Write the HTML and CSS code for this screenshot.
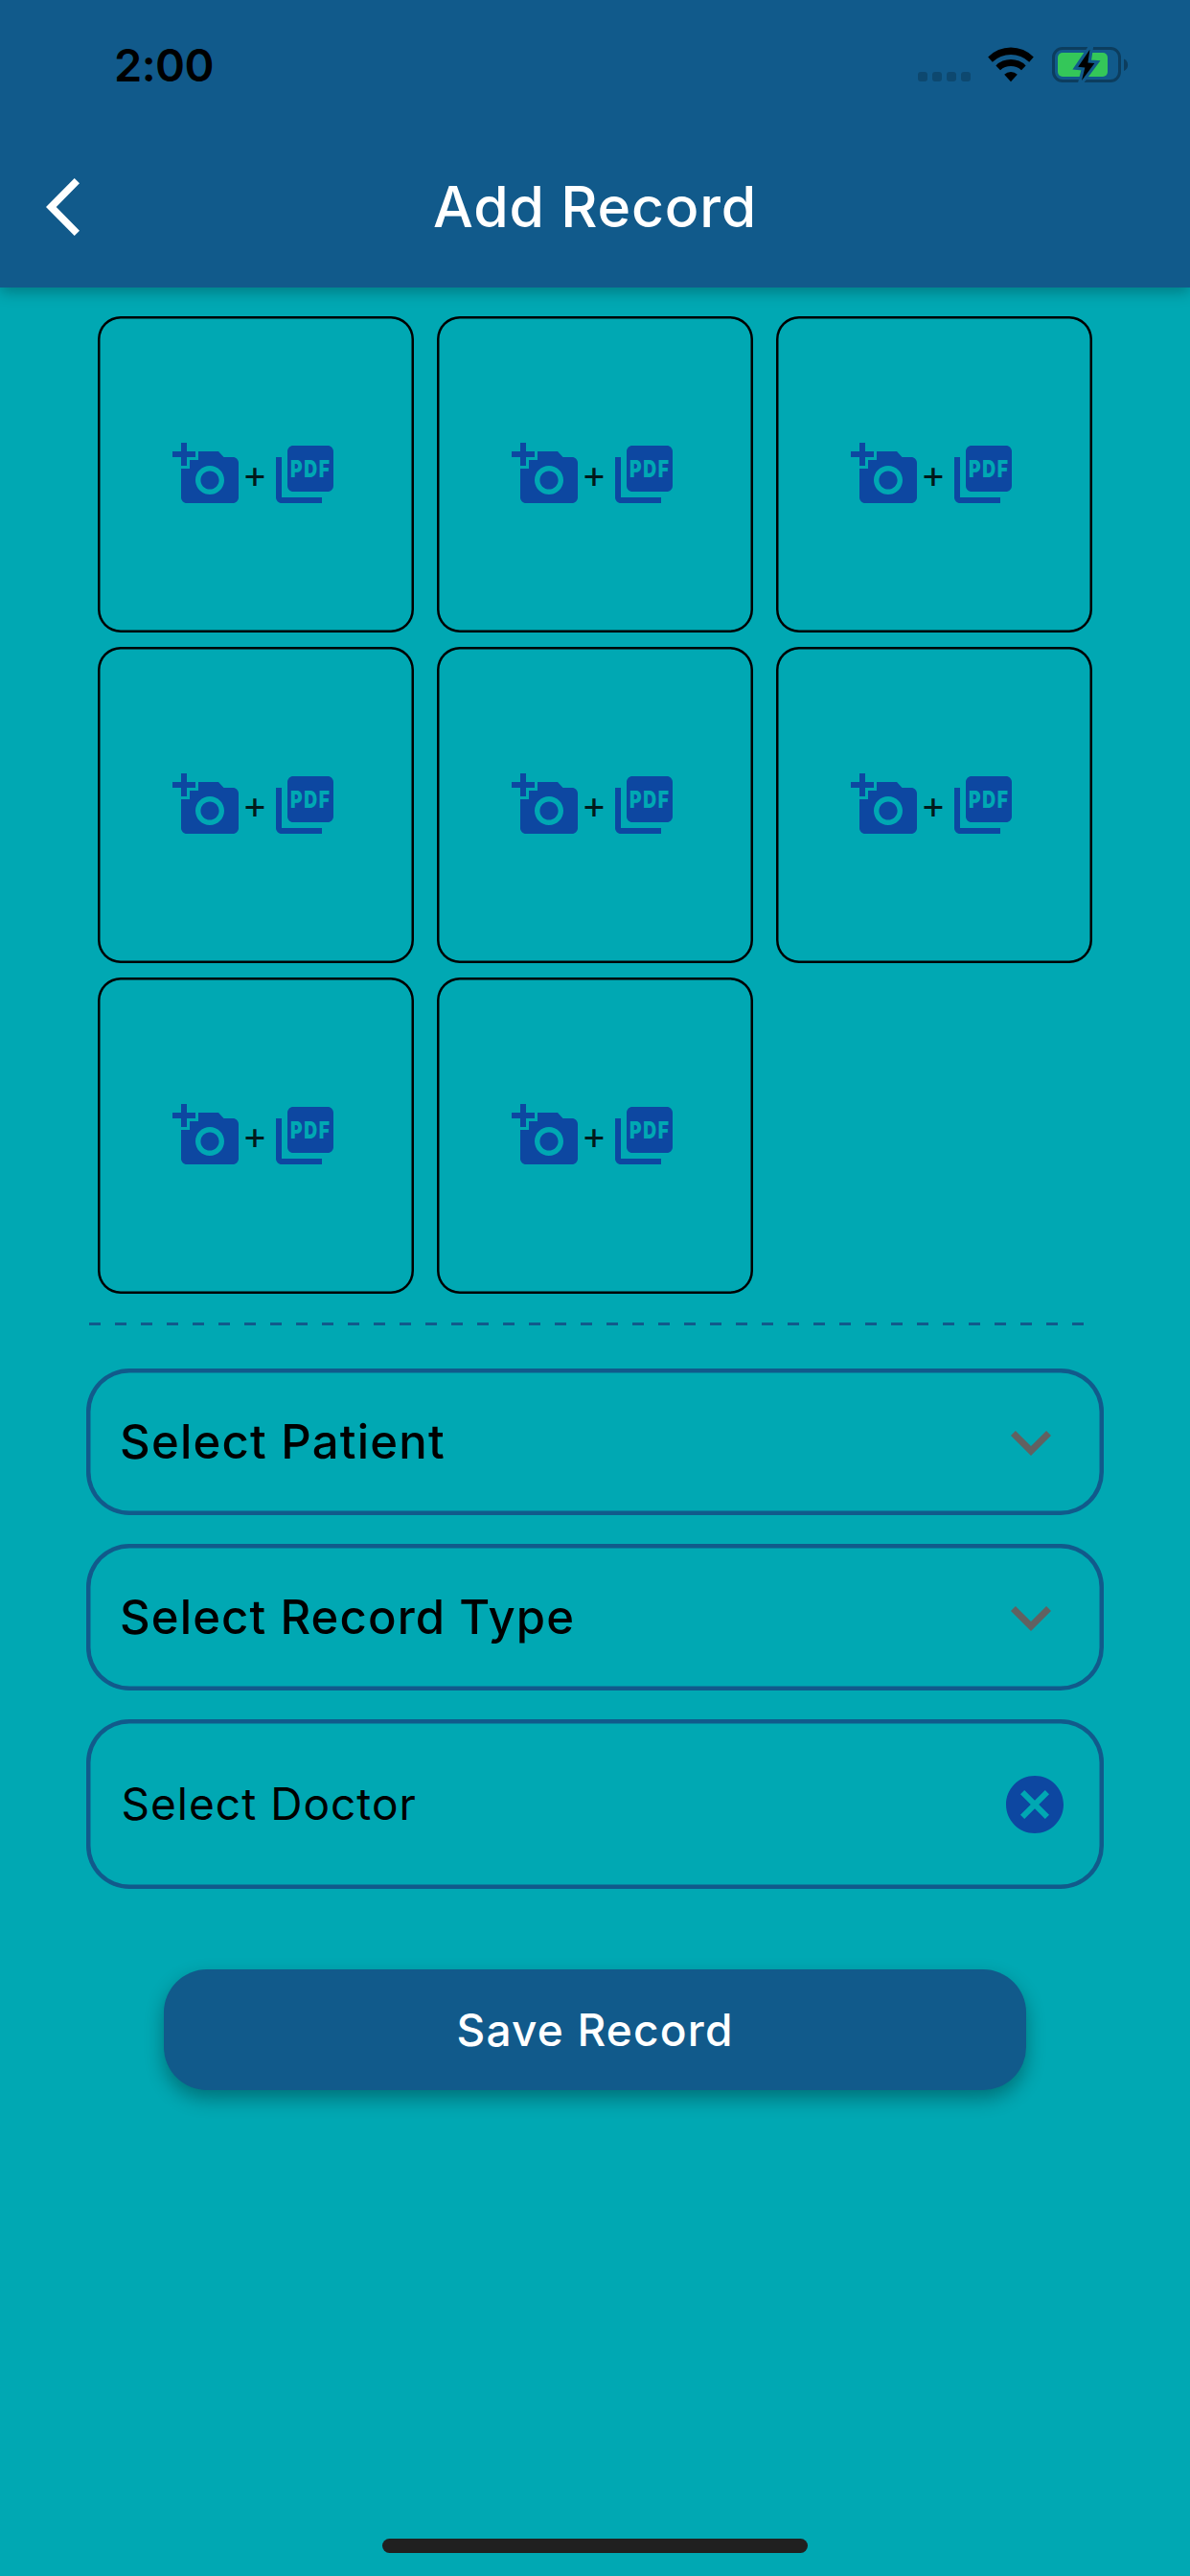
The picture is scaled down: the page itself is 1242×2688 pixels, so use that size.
FILE: index.html
```html
<!DOCTYPE html>
<html lang="en">
<head>
<meta charset="utf-8">
<meta name="viewport" content="width=device-width">
<title>Add Record</title>
<link rel="stylesheet" href="styles.css">
</head>
<body>
<svg width="0" height="0" class="defs" aria-hidden="true">
  <symbol id="add-photo" viewBox="0 0 24 24">
    <path d="M3 4V1h2v3h3v2H5v3H3V6H0V4h3zm3 6V7h3V4h7l1.83 2H21c1.1 0 2 .9 2 2v12c0 1.1-.9 2-2 2H5c-1.1 0-2-.9-2-2V10h3zm7 9c2.76 0 5-2.24 5-5s-2.24-5-5-5-5 2.24-5 5 2.24 5 5 5zm-3.2-5c0 1.77 1.43 3.2 3.2 3.2s3.2-1.43 3.2-3.2-1.43-3.2-3.2-3.2-3.2 1.43-3.2 3.2z"/>
  </symbol>
  <symbol id="pages" viewBox="0 0 24 24">
    <path d="M20 2H8c-1.1 0-2 .9-2 2v12c0 1.1.9 2 2 2h12c1.1 0 2-.9 2-2V4c0-1.1-.9-2-2-2zM4 6H2v14c0 1.1.9 2 2 2h14v-2H4V6z"/>
  </symbol>
  <symbol id="chevron-down" viewBox="0 0 24 24">
    <path d="M7.41 8.59L12 13.17l4.59-4.58L18 10l-6 6-6-6z"/>
  </symbol>
</svg>

<header class="app-bar">
  <div class="status-bar">
    <span class="time">2:00</span>
    <div class="status-icons">
      <span class="signal"><i></i><i></i><i></i><i></i></span>
      <svg class="wifi" width="48" height="37" viewBox="0 0 48 37">
        <path d="M0.2 10.6A33 33 0 0 1 47.8 10.6L43.2 15.7A28 28 0 0 0 4.8 15.7Z"/>
        <path d="M8.4 19.4A22 22 0 0 1 39.6 19.4L35 24.3A16.5 16.5 0 0 0 13 24.3Z"/>
        <path d="M17.2 28.7A9.8 9.8 0 0 1 30.8 28.7L24 36.2Z"/>
      </svg>
      <svg class="battery" width="80" height="37" viewBox="0 0 80 37">
        <rect x="1.5" y="1.5" width="69" height="34" rx="9.5" class="battery-shell"/>
        <path d="M75 12.5a6.8 6.8 0 0 1 0 12.5z" class="battery-cap"/>
        <rect x="6" y="6" width="52" height="25" rx="5" class="battery-level"/>
        <path d="M39.4 2.8L27.2 20.8L34.4 21.4L31 35L44.4 17L37.4 16.4Z" class="bolt-gap"/>
        <path d="M39.4 2.8L27.2 20.8L34.4 21.4L31 35L44.4 17L37.4 16.4Z"/>
      </svg>
    </div>
  </div>
  <div class="title-bar">
    <svg class="back" width="36" height="60" viewBox="0 0 36 60"><path d="M35 5.3L29.7 0L0 30L29.7 60L35 54.7L10.7 30Z"/></svg>
    <h1>Add Record</h1>
  </div>
</header>

<main>
  <div class="uploads">
    <div class="tile"><svg><use href="#add-photo"/></svg><span>+</span><svg viewBox="0 0 24 24"><use href="#pages"/><text x="7" y="13" textLength="14.2" lengthAdjust="spacingAndGlyphs">PDF</text></svg></div>
    <div class="tile"><svg><use href="#add-photo"/></svg><span>+</span><svg viewBox="0 0 24 24"><use href="#pages"/><text x="7" y="13" textLength="14.2" lengthAdjust="spacingAndGlyphs">PDF</text></svg></div>
    <div class="tile"><svg><use href="#add-photo"/></svg><span>+</span><svg viewBox="0 0 24 24"><use href="#pages"/><text x="7" y="13" textLength="14.2" lengthAdjust="spacingAndGlyphs">PDF</text></svg></div>
    <div class="tile"><svg><use href="#add-photo"/></svg><span>+</span><svg viewBox="0 0 24 24"><use href="#pages"/><text x="7" y="13" textLength="14.2" lengthAdjust="spacingAndGlyphs">PDF</text></svg></div>
    <div class="tile"><svg><use href="#add-photo"/></svg><span>+</span><svg viewBox="0 0 24 24"><use href="#pages"/><text x="7" y="13" textLength="14.2" lengthAdjust="spacingAndGlyphs">PDF</text></svg></div>
    <div class="tile"><svg><use href="#add-photo"/></svg><span>+</span><svg viewBox="0 0 24 24"><use href="#pages"/><text x="7" y="13" textLength="14.2" lengthAdjust="spacingAndGlyphs">PDF</text></svg></div>
    <div class="tile"><svg><use href="#add-photo"/></svg><span>+</span><svg viewBox="0 0 24 24"><use href="#pages"/><text x="7" y="13" textLength="14.2" lengthAdjust="spacingAndGlyphs">PDF</text></svg></div>
    <div class="tile"><svg><use href="#add-photo"/></svg><span>+</span><svg viewBox="0 0 24 24"><use href="#pages"/><text x="7" y="13" textLength="14.2" lengthAdjust="spacingAndGlyphs">PDF</text></svg></div>
  </div>

  <div class="divider"></div>

  <div class="fields">
    <div class="field patient"><span>Select Patient</span><svg class="chevron"><use href="#chevron-down"/></svg></div>
    <div class="field record-type"><span>Select Record Type</span><svg class="chevron"><use href="#chevron-down"/></svg></div>
    <div class="field doctor"><span>Select Doctor</span>
      <svg class="clear" viewBox="0 0 24 24"><path d="M12 2C6.47 2 2 6.47 2 12s4.47 10 10 10 10-4.47 10-10S17.53 2 12 2zm5 13.59L15.59 17 12 13.41 8.41 17 7 15.59 10.59 12 7 8.41 8.41 7 12 10.59 15.59 7 17 8.41 13.41 12 17 15.59z"/></svg>
    </div>
  </div>

  <button class="save" type="button">Save Record</button>
</main>

<div class="home-indicator"></div>
</body>
</html>
```
FILE: styles.css
```css
:root {
  --teal: #00a8b3;
  --navy: #115a8b;
  --blue: #0d47a1;
}

* { box-sizing: border-box; }

body {
  margin: 0;
  width: 1242px;
  height: 2688px;
  display: flex;
  flex-direction: column;
  background: var(--teal);
  color: #000;
  font-family: Inter, "Liberation Sans", sans-serif;
}

svg { display: block; flex: none; }
.defs { position: absolute; }

.app-bar {
  height: 300px;
  flex: none;
  background: var(--navy);
  box-shadow: 0 5px 14px rgba(0, 0, 0, .26);
}

.status-bar {
  height: 132px;
  padding: 0 64px 0 119px;
  display: flex;
  justify-content: space-between;
  align-items: flex-start;
}
.time {
  margin-top: 40px;
  font-size: 47px;
  font-weight: 600;
  line-height: 56px;
  letter-spacing: -.6px;
}
.status-icons {
  margin-top: 49px;
  height: 37px;
  display: flex;
  align-items: flex-end;
}
.signal { display: flex; gap: 5px; margin: 0 18px 1px 0; }
.signal i { width: 10px; height: 10px; border-radius: 3px; background: rgba(0, 0, 0, .2); }
.wifi { margin-right: 19px; }
.battery-shell { fill: none; stroke: #0c3d5e; stroke-width: 3; }
.battery-cap { fill: #0c3d5e; }
.battery-level { fill: #34c759; }
.bolt-gap { fill: none; stroke: var(--navy); stroke-width: 6.5; stroke-miterlimit: 8; }

.title-bar {
  height: 168px;
  display: grid;
  grid-template-columns: 120px 1fr 120px;
  align-items: center;
}
.back { margin-left: 48px; fill: #fff; }
h1 {
  margin: 0;
  color: #fff;
  font-size: 59px;
  font-weight: 500;
  line-height: 72px;
  letter-spacing: .78px;
  text-align: center;
}

main { display: flex; flex-direction: column; padding: 30px 90px 0; }

.uploads {
  display: grid;
  grid-template-columns: repeat(3, 330px);
  grid-auto-rows: 330px;
  gap: 15px 24px;
  padding-left: 12px;
}
.tile {
  display: flex;
  align-items: center;
  justify-content: center;
  border-radius: 24px;
  box-shadow: inset 0 0 0 2.5px #000;
}
.tile svg { width: 72px; height: 72px; fill: var(--blue); }
.tile span {
  width: 30px;
  padding: 0 2px 1px 0;
  color: #021a1c;
  font-size: 40px;
  line-height: 48px;
  text-align: center;
}
.tile text {
  fill: var(--teal);
  font: 900 8.25px Inter, sans-serif;
  letter-spacing: .7px;
}

.divider {
  width: 1038px;
  height: 3px;
  margin: 30px 0 45px 3px;
  background: repeating-linear-gradient(to right, var(--navy) 0 12px, transparent 12px 27px);
}

.fields { display: flex; flex-direction: column; gap: 30px; }
.field {
  height: 153px;
  padding: 0 34px 0 35px;
  display: flex;
  align-items: center;
  justify-content: space-between;
  border-radius: 45px;
  box-shadow: inset 0 0 0 4.5px var(--navy);
  font-size: 49px;
  font-weight: 500;
  line-height: 60px;
  letter-spacing: 1.24px;
}
.field span { padding-top: 1px; }
.record-type { letter-spacing: 1.12px; }
.doctor {
  height: 177px;
  padding: 0 36px 0 36.5px;
  font-size: 46px;
  font-weight: 400;
  letter-spacing: 1.02px;
}
.doctor span { padding: 0 0 2px; }
.chevron { width: 84px; height: 84px; fill: #616161; }
.clear { width: 72px; height: 72px; fill: var(--blue); }

.save {
  width: 900px;
  height: 126px;
  margin: 84px auto 0;
  padding: 0 0 1px;
  border: 0;
  border-radius: 45px;
  background: var(--navy);
  box-shadow: 0 9px 20px rgba(0, 0, 0, .32);
  color: #fff;
  font: 550 46px Inter, sans-serif;
  letter-spacing: 1.2px;
}

.home-indicator {
  width: 444px;
  height: 15px;
  margin: auto auto 24px;
  border-radius: 8px;
  background: #202020;
}
```
